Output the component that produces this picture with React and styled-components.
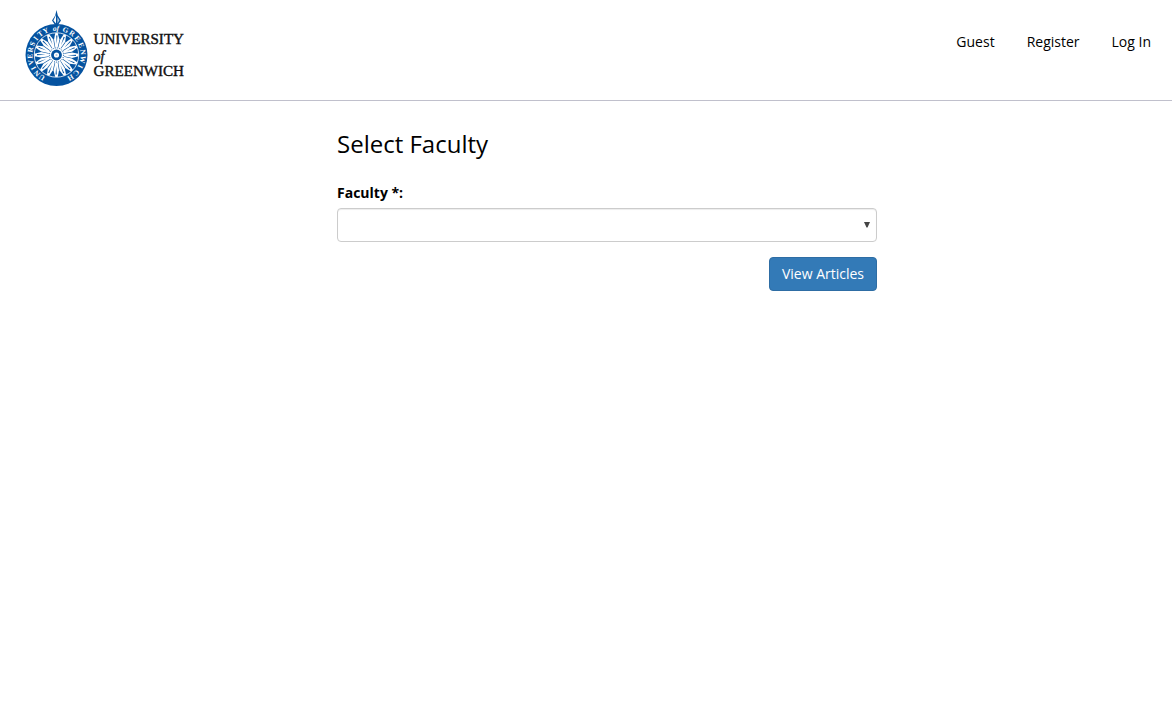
import React from "react";
import styled, { createGlobalStyle } from "styled-components";

const GlobalStyle = createGlobalStyle`
  *, *::before, *::after { box-sizing: border-box; }
  body {
    margin: 0;
    background: #fff;
    color: #000;
    font: 14px/20px "Open Sans", sans-serif;
  }
`;

const Header = styled.header`
  display: flex;
  justify-content: space-between;
  height: 101px;
  border-bottom: 1px solid #c0c0cc;
`;

const Logo = styled.svg`
  display: block;
  width: 200px;
  height: 100px;
  flex: none;
`;

const Nav = styled.nav`
  display: flex;
  gap: 32px;
  padding: 32px 21px 0 0;
`;

const NavLink = styled.a`
  color: #000;
  text-decoration: none;
`;

const Form = styled.form`
  display: flex;
  flex-direction: column;
  width: 540px;
  margin: 29px 0 0 337px;
`;

const Title = styled.h1`
  margin: 0 0 26px;
  font-size: 24px;
  line-height: 27px;
  font-weight: 400;
`;

const Label = styled.label`
  margin-bottom: 5px;
  font-weight: 700;
  line-height: 20px;
`;

const SelectBox = styled.div`
  display: grid;
  align-items: center;
  height: 34px;
  margin-bottom: 15px;
  & > * { grid-area: 1 / 1; }
`;

const Select = styled.select`
  appearance: none;
  width: 100%;
  height: 34px;
  margin: 0;
  padding: 6px 12px;
  border: 1px solid #ccc;
  border-radius: 4px;
  background: #fff;
  box-shadow: inset 0 1px 1px rgba(0, 0, 0, 0.075);
  font: inherit;
`;

const Arrow = styled.svg`
  justify-self: end;
  width: 6px;
  height: 6px;
  margin-right: 7px;
  pointer-events: none;
`;

const Button = styled.button`
  align-self: flex-end;
  width: 108px;
  height: 34px;
  padding: 0 0 1px;
  border: 1px solid #2e6da4;
  border-radius: 4px;
  background: #337ab7;
  color: #fff;
  font: inherit;
`;

const BLUE = "#0553a0";
const spokes = Array.from({ length: 16 }, (_, i) => i * 22.5);

const RimLetter = styled.text`
  fill: #fff;
  font-family: "Liberation Serif", serif;
  font-style: ${(p) => (p.$italic ? "italic" : "normal")};
  font-weight: 700;
  font-size: 7.4px;
  text-anchor: middle;
`;

function RimWord({ word, from, to, italic }) {
  const step = (to - from) / (word.length - 1);
  return [...word].map((letter, i) => (
    <RimLetter key={i} $italic={italic} y="-24.2" transform={`rotate(${from + i * step})`}>
      {letter}
    </RimLetter>
  ));
}

function UniversityLogo() {
  return (
    <Logo viewBox="0 0 200 100" role="img" aria-label="University of Greenwich">
      <circle cx="56.5" cy="55" r="31" fill={BLUE} />
      <g transform="translate(56.5 55)">
        <circle r="22.2" fill="none" stroke="#fff" strokeWidth=".8" />
        {spokes.map((a) => (
          <g key={a} transform={`rotate(${a})`}>
            <path d="M-1.2 -7.5 H1.2 L3 -15.5 L1.2 -22 H-1.2 L-2.5 -15.5Z" fill="#fff" />
            <path d="M.3 -11 L.9 -19.5 H-.3Z" fill={BLUE} />
          </g>
        ))}
        <circle r="8" fill="#fff" />
        <circle r="7.1" fill="none" stroke={BLUE} strokeWidth="1" strokeDasharray="1 1.1" />
        <circle r="5.4" fill={BLUE} />
        <circle r="2.6" fill="#fff" />
        <circle r="1.1" fill={BLUE} opacity=".3" />
        <RimWord word="UNIVERSITY" from={213} to={336} />
        <RimWord word="of" from={356} to={363} italic />
        <RimWord word="GREENWICH" from={20} to={148} />
      </g>
      <path d="M56.5 10 L57.8 15.5 L61 20.5 L57.3 26 H55.7 L52 20.5 L55.2 15.5Z" fill={BLUE} />
      <path d="M56 15 V23.5 L53.4 20.5Z" fill="#fff" />
      <path d="M57.4 17 L59.4 20.5 L57.4 23.5Z" fill="#a9c5df" />
      <g fill="#111" stroke="#111" strokeWidth=".4" fontFamily="Liberation Serif, serif" fontSize="14.8">
        <text x="93.5" y="43.7" textLength="90.5" lengthAdjust="spacingAndGlyphs">UNIVERSITY</text>
        <text x="93.5" y="60.5" fontStyle="italic" fontSize="14">of</text>
        <text x="93.5" y="76.2" textLength="90.5" lengthAdjust="spacingAndGlyphs">GREENWICH</text>
      </g>
    </Logo>
  );
}

export default function App() {
  return (
    <>
      <GlobalStyle />
      <Header>
        <UniversityLogo />
        <Nav>
          <NavLink>Guest</NavLink>
          <NavLink>Register</NavLink>
          <NavLink>Log In</NavLink>
        </Nav>
      </Header>
      <Form>
        <Title>Select Faculty</Title>
        <Label htmlFor="faculty">Faculty *:</Label>
        <SelectBox>
          <Select id="faculty" defaultValue="">
            <option value="" />
          </Select>
          <Arrow viewBox="0 0 6 6">
            <path d="M0 0H6L3.5 5.5H2.5Z" fill="#444" />
          </Arrow>
        </SelectBox>
        <Button type="button">View Articles</Button>
      </Form>
    </>
  );
}
